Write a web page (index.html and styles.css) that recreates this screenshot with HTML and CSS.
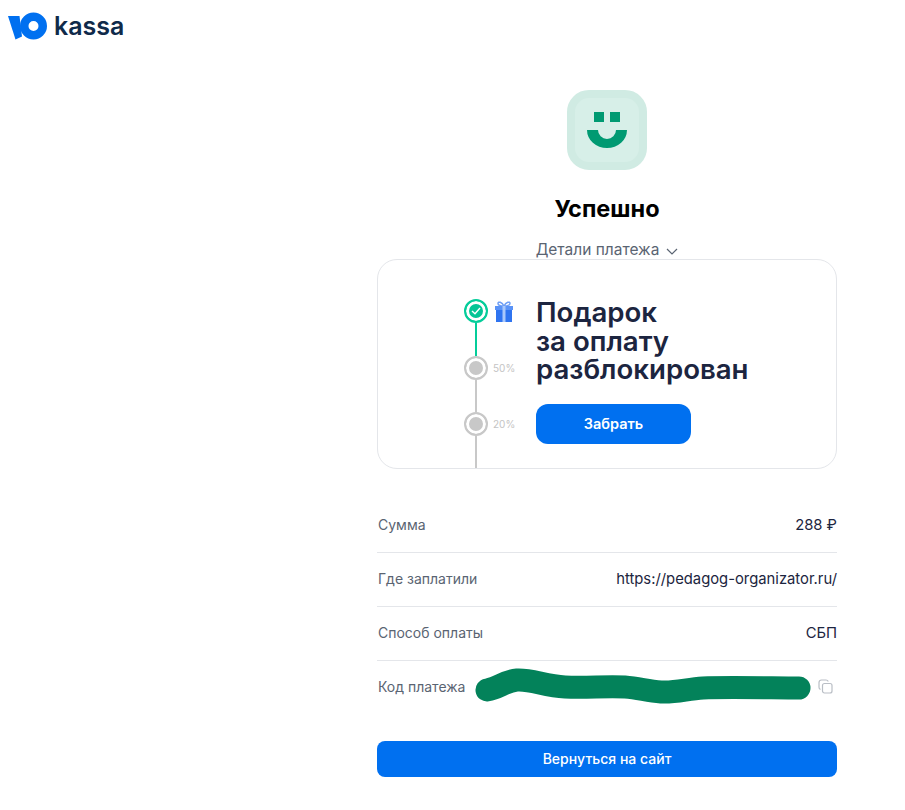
FILE: index.html
```html
<!DOCTYPE html>
<html>
<head>
    <title>Успешно - ЮKassa</title>
    <link rel="stylesheet" href="styles.css">
</head>
<body>
    <header class="header">
        <svg class="logo-mark" width="40" height="30" viewBox="0 0 40 30">
            <path d="M0 4H11.500L14 24.500L7.500 27.500Z" fill="#0070f0"/>
            <path fill-rule="evenodd" d="M25.500 0.500a13.500 13.500 0 1 1 0 27 13.500 13.500 0 0 1-13.500-13.500A13.500 13.500 0 0 1 25.500 0.500Zm0 8.500a5 5 0 1 0 0 10 5 5 0 0 0 0-10Z" fill="#0070f0"/>
        </svg>
        <span class="logo-text">kassa</span>
    </header>

    <main class="content">
        <div class="status">
            <div class="smile">
                <svg width="40" height="36" viewBox="0 0 40 36">
                    <rect x="7" y="0" width="10" height="10" fill="#009a72"/>
                    <rect x="23" y="0" width="10" height="10" fill="#009a72"/>
                    <path d="M0 18H40A20 18 0 0 1 0 18ZM11 18A9 9 0 0 0 29 18Z" fill="#009a72" fill-rule="evenodd"/>
                </svg>
            </div>
            <h1>Успешно</h1>
            <div class="details">
                Детали платежа
                <svg width="12" height="7" viewBox="0 0 12 7"><path d="M1 1l5 5 5-5" fill="none" stroke="#5a6472" stroke-width="1.200"/></svg>
            </div>
        </div>

        <section class="gift">
            <div class="steps">
                <div class="step-row">
                    <span class="dot dot-done">
                        <svg width="10" height="8" viewBox="0 0 10 8"><path d="M1 4l3 2.800L9 1" fill="none" stroke="#fff" stroke-width="1.400"/></svg>
                    </span>
                    <svg class="gift-icon" width="18" height="21" viewBox="0 0 18 21">
                        <path d="M9 5C7 1 3 0 3 2.500S6 5 9 5C12 5 15 5 15 2.500S11 1 9 5Z" fill="none" stroke="#6f9ff5" stroke-width="1.500"/>
                        <rect x="0" y="5" width="18" height="4" fill="#5a93f7"/>
                        <rect x="1" y="9" width="16" height="12" fill="#2f74f0"/>
                        <rect x="7.500" y="5" width="3" height="16" fill="#a9c8fb"/>
                    </svg>
                </div>
                <div class="line line-done"></div>
                <div class="step-row">
                    <span class="dot"></span>
                    <span class="percent">50%</span>
                </div>
                <div class="line line-mid"></div>
                <div class="step-row">
                    <span class="dot"></span>
                    <span class="percent">20%</span>
                </div>
                <div class="line line-end"></div>
            </div>
            <div class="gift-info">
                <h2>Подарок<br>за оплату<br>разблокирован</h2>
                <button class="btn-take">Забрать</button>
            </div>
        </section>

        <div class="rows">
            <div class="row">
                <span class="label">Сумма</span>
                <span class="value">288 ₽</span>
            </div>
            <div class="row">
                <span class="label">Где заплатили</span>
                <span class="value">https://pedagog-organizator.ru/</span>
            </div>
            <div class="row">
                <span class="label">Способ оплаты</span>
                <span class="value">СБП</span>
            </div>
            <div class="row row-code">
                <span class="label">Код платежа</span>
                <svg class="scribble" width="336" height="40" viewBox="0 0 336 40">
                    <path d="M12 24C24 22 30 15 42 14C56 13 70 20 90 21C112 22 130 20 150 21C164 22 172 25 186 26C200 27 212 23 228 22C250 21 300 22 324 22" fill="none" stroke="#03825a" stroke-width="23" stroke-linecap="round"/>
                </svg>
                <svg class="copy" width="15" height="15" viewBox="0 0 15 15">
                    <rect x="4.500" y="4.500" width="9.500" height="9.500" rx="2" fill="none" stroke="#b9bec5" stroke-width="1.200"/>
                    <path d="M2.500 10.500C1.500 10 1 9.300 1 8.200V3.500C1 2 2 1 3.500 1H8C9 1 9.800 1.500 10.300 2.500" fill="none" stroke="#b9bec5" stroke-width="1.200"/>
                </svg>
            </div>
        </div>

        <button class="btn-back">Вернуться на сайт</button>
    </main>
</body>
</html>
```

FILE: styles.css
```css
body {
    margin: 0;
    background: #fff;
    font-family: Inter, Arial, sans-serif;
    color: #1c2540;
}
.header {
    display: flex;
    align-items: center;
    gap: 6px;
    height: 54px;
    padding-left: 8px;
}
.logo-mark {
    display: block;
}
.logo-text {
    font-size: 25px;
    font-weight: 600;
    color: #0f2a4a;
    line-height: 30px;
    margin-top: -2px;
}
.content {
    width: 460px;
    margin-left: 377px;
    padding-top: 36px;
}
.status {
    display: flex;
    flex-direction: column;
    align-items: center;
}
.smile {
    width: 64px;
    height: 64px;
    background: #d7efe8;
    border: 8px solid #d0ebe3;
    border-radius: 22px;
    display: flex;
    align-items: center;
    justify-content: center;
}
.smile svg {
    display: block;
}
h1 {
    margin: 24px 0 0;
    font-size: 23.500px;
    line-height: 30px;
    font-weight: 700;
    color: #000;
}
.details {
    display: flex;
    align-items: center;
    gap: 7px;
    margin-top: 17px;
    height: 18px;
    font-size: 15.500px;
    color: #5a6472;
    line-height: 18px;
}
.details svg {
    margin-top: 2px;
}
.gift {
    display: flex;
    height: 208px;
    border: 1px solid #e4e6ea;
    border-radius: 20px;
    padding-left: 86px;
    overflow: hidden;
}
.steps {
    width: 72px;
    padding-top: 39px;
}
.step-row {
    display: flex;
    align-items: center;
    height: 24px;
}
.dot {
    box-sizing: border-box;
    flex: none;
    width: 24px;
    height: 24px;
    border: 2px solid #c8c8c8;
    border-radius: 50%;
    background: #c8c8c8;
    box-shadow: inset 0 0 0 3px #fff;
    display: flex;
    align-items: center;
    justify-content: center;
}
.dot-done {
    border-color: #04cd9a;
    background: #04c596;
}
.gift-icon {
    margin-left: 7px;
}
.percent {
    margin-left: 5px;
    font-size: 10px;
    color: #c4c4c4;
}
.line {
    width: 2px;
    height: 33px;
    margin-left: 11px;
    background: #c8c8c8;
}
.line-done {
    background: #04cd9a;
}
.line-mid {
    height: 32px;
}
.line-end {
    height: 40px;
}
.gift-info {
    padding-top: 38px;
}
h2 {
    margin: 0;
    font-size: 27.600px;
    line-height: 28.500px;
    font-weight: 600;
    color: #1c2540;
}
.btn-take {
    display: block;
    width: 155px;
    height: 40px;
    margin-top: 20.500px;
    padding-bottom: 2px;
    border: none;
    border-radius: 12px;
    background: #0070f0;
    color: #fff;
    font-family: Inter, sans-serif;
    font-size: 14.500px;
    font-weight: 600;
}
.rows {
    margin-top: 30px;
}
.row {
    box-sizing: border-box;
    display: flex;
    justify-content: space-between;
    align-items: center;
    height: 54px;
    padding-bottom: 2px;
    border-bottom: 1px solid #e4e6ea;
    font-size: 14px;
}
.row-code {
    border-bottom: none;
    justify-content: flex-start;
    padding-bottom: 4px;
}
.label {
    color: #5a6472;
    padding-left: 1px;
}
.value {
    color: #1c2540;
    font-size: 14.800px;
}
.scribble {
    flex: none;
    margin-left: 10px;
}
.copy {
    flex: none;
    margin-left: 7px;
}
.btn-back {
    display: block;
    width: 100%;
    height: 36px;
    margin-top: 26px;
    padding-bottom: 2px;
    border: none;
    border-radius: 8px;
    background: #0070f0;
    color: #fff;
    font-family: Inter, sans-serif;
    font-size: 14px;
    font-weight: 500;
}
```
